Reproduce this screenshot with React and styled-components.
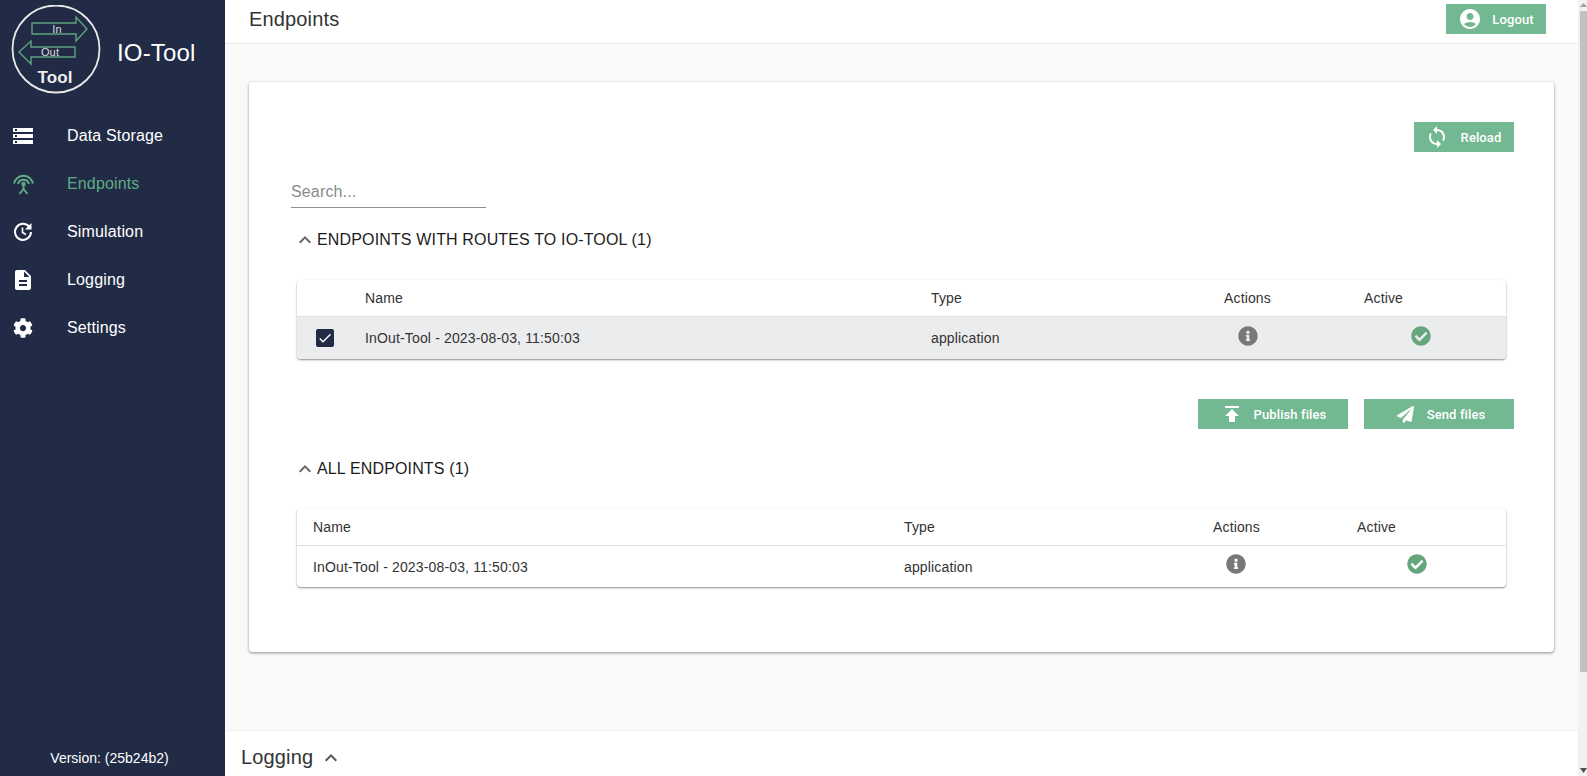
import React from "react";
import styled, { createGlobalStyle } from "styled-components";
import { MdStorage, MdAccountCircle, MdSync, MdPublish, MdKeyboardArrowUp, MdCheck, MdDescription } from "react-icons/md";
import { FaCog, FaPaperPlane, FaInfoCircle, FaCheckCircle } from "react-icons/fa";

const GlobalStyle = createGlobalStyle`
  html, body { margin: 0; padding: 0; height: 100%; overflow: hidden; }
  body { font-family: "Liberation Sans", Arial, sans-serif; background: #fafafa; letter-spacing: 0.15px; }
  * { box-sizing: border-box; }
`;

const Page = styled.div`
  display: flex;
  width: 100%;
  height: 776px;
  overflow: hidden;
`;

const Sidebar = styled.aside`
  flex: 0 0 225px;
  display: flex;
  flex-direction: column;
  background: #212b46;
  color: #fff;
`;

const Brand = styled.div`
  display: flex;
  align-items: center;
  gap: 16px;
  height: 112px;
  padding: 0 0 12px 11px;
`;

const BrandName = styled.span`
  font-size: 24px;
  color: #fff;
  margin-bottom: -6px;
`;

const Nav = styled.nav`
  display: flex;
  flex-direction: column;
`;

const NavItem = styled.div`
  display: flex;
  align-items: center;
  height: 48px;
  font-size: 16px;
  color: ${(p) => (p.$active ? "#5eab85" : "#fff")};
`;

const NavIcon = styled.span`
  flex: 0 0 67px;
  display: flex;
  justify-content: flex-start;
  padding-left: ${(p) => p.$left}px;
  align-items: center;
`;

const Version = styled.div`
  margin-top: auto;
  height: 34px;
  font-size: 14px;
  letter-spacing: 0;
  text-align: center;
  color: #fff;
  padding: 8px 6px 0 0;
`;

const Main = styled.div`
  flex: 1;
  min-width: 0;
  display: flex;
  flex-direction: column;
`;

const Header = styled.header`
  flex: 0 0 44px;
  display: flex;
  align-items: flex-start;
  justify-content: space-between;
  background: #fff;
  border-bottom: 1px solid #ebebeb;
  padding: 4px 32px 0 24px;
`;

const PageTitle = styled.h1`
  margin: 4px 0 0;
  font-size: 20px;
  font-weight: 400;
  color: #333;
`;

const Button = styled.button`
  display: flex;
  align-items: center;
  justify-content: center;
  gap: ${(p) => p.$gap}px;
  width: ${(p) => p.$width || 100}px;
  height: 30px;
  padding: 0 ${(p) => p.$shiftLeft || 0}px 0 ${(p) => p.$shiftRight || 0}px;
  border: 0;
  background: #72b891;
  color: #fff;
  font-family: Roboto, sans-serif;
  font-size: 13px;
  font-weight: 500;
  letter-spacing: 0.1px;
`;

const Content = styled.main`
  flex: 1;
  padding: 38px 24px 0;
  background: #f9f9f9;
`;

const Card = styled.section`
  height: 570px;
  background: #fff;
  border-radius: 4px;
  box-shadow: 0 1px 3px rgba(0, 0, 0, 0.45);
  padding: 40px 40px 0 42px;
`;

const ButtonRow = styled.div`
  display: flex;
  justify-content: flex-end;
  gap: 16px;
  margin-top: ${(p) => p.$top || 0}px;
`;

const SearchField = styled.input`
  display: block;
  width: 195px;
  height: 32px;
  margin-top: 24px;
  padding: 0;
  border: 0;
  border-bottom: 1px solid #8f8f8f;
  outline: none;
  font-family: "Liberation Sans", Arial, sans-serif;
  font-size: 16px;
  letter-spacing: 0.15px;
  color: #333;
  &::placeholder { color: #8a8a8a; opacity: 1; }
`;

const SectionTitle = styled.h2`
  display: flex;
  align-items: center;
  gap: 0;
  height: 24px;
  margin: ${(p) => p.$top}px 0 ${(p) => p.$bottom}px 2px;
  font-size: 16px;
  font-weight: 400;
  color: #1c1c1c;
  svg { color: #666; }
`;

const Table = styled.div`
  margin-left: 6px;
  width: 1209px;
  border-radius: 4px;
  box-shadow: 0 1px 2px rgba(0, 0, 0, 0.45);
`;

const Row = styled.div`
  display: grid;
  grid-template-columns: ${(p) => p.$columns};
  align-items: center;
  height: ${(p) => p.$height}px;
  padding-left: ${(p) => p.$pad}px;
  font-size: 14px;
  color: #333;
  background: ${(p) => (p.$selected ? "#ebecee" : "transparent")};
  border-top: ${(p) => (p.$body ? "1px solid #e0e0e0" : "0")};
  border-radius: ${(p) => (p.$body ? "0 0 4px 4px" : "4px 4px 0 0")};
`;

const IconCell = styled.div`
  display: flex;
  padding-left: ${(p) => p.$offset}px;
  color: ${(p) => p.$color};
  padding-bottom: 5px;
`;

const CheckBox = styled.span`
  display: flex;
  align-items: center;
  justify-content: center;
  width: 18px;
  height: 18px;
  margin-left: 19px;
  border-radius: 2px;
  background: #212b46;
  color: #fff;
`;

const LoggingBar = styled.footer`
  flex: 0 0 45px;
  display: flex;
  align-items: center;
  gap: 6px;
  background: #fff;
  border-radius: 4px 4px 0 0;
  box-shadow: 0 -1px 1px rgba(0, 0, 0, 0.04);
  padding: 8px 0 0 16px;
  font-size: 20px;
  color: #333;
  svg { color: #555; }
`;

const ScrollTrack = styled.div`
  flex: 0 0 9px;
  display: flex;
  flex-direction: column;
  align-items: flex-end;
  background: #f1f1f1;
`;

const ScrollArrow = styled.span`
  display: block;
  width: 7px;
  height: 11px;
  font-size: 0;
  margin-top: ${(p) => (p.$end ? "auto" : "0")};
`;

const ScrollThumb = styled.div`
  width: 7px;
  height: 661px;
  background: #c1c1c1;
`;

function Logo() {
  return (
    <svg width="90" height="90" viewBox="0 0 90 90">
      <circle cx="45" cy="44" r="43.5" fill="none" stroke="#e8e8e8" strokeWidth="1.8" />
      <path d="M21 18H65V12L76 24L65 36V29H21Z" fill="none" stroke="#5da37f" strokeWidth="1.4" />
      <path d="M64 42H20V36L8 47L20 59V52H64Z" fill="none" stroke="#5da37f" strokeWidth="1.4" />
      <text x="46" y="28" fontSize="11" fill="#dcdcdc" textAnchor="middle" fontFamily="Liberation Sans">In</text>
      <text x="39" y="51" fontSize="11" fill="#dcdcdc" textAnchor="middle" fontFamily="Liberation Sans">Out</text>
      <text x="44" y="78" fontSize="17" fontWeight="700" fill="#eee" textAnchor="middle" fontFamily="Liberation Sans">Tool</text>
    </svg>
  );
}

function EndpointIcon() {
  return (
    <svg width="23" height="22" viewBox="0 0 23 22" fill="none" stroke="#5eab85" strokeWidth="2">
      <path d="M2 10.5A9.7 9.7 0 0 1 21 10.5" />
      <path d="M6 11A5.7 5.7 0 0 1 17 11" />
      <circle cx="11.5" cy="11" r="2.2" fill="#5eab85" stroke="none" />
      <path d="M11.5 12V16M11.5 16L7.5 21M11.5 16L15.5 21" />
    </svg>
  );
}

function SimulationIcon() {
  return (
    <svg width="20" height="20" viewBox="0 0 20 20" fill="none" stroke="#fff" strokeWidth="2">
      <path d="M16.5 5.2A8 8 0 1 0 18 10" />
      <path d="M18.5 1V7.5H12Z" fill="#fff" stroke="none" />
      <path d="M9.5 5.5V10.5L13 12.5" strokeWidth="1.6" />
    </svg>
  );
}

const GRID_ONE = "68px 566px 293px 140px 1fr";
const GRID_TWO = "591px 309px 144px 1fr";

export default function App() {
  return (
    <Page>
      <GlobalStyle />
      <Sidebar>
        <Brand>
          <Logo />
          <BrandName>IO-Tool</BrandName>
        </Brand>
        <Nav>
          <NavItem><NavIcon $left={11}><MdStorage size={24} /></NavIcon>Data Storage</NavItem>
          <NavItem $active><NavIcon $left={12}><EndpointIcon /></NavIcon>Endpoints</NavItem>
          <NavItem><NavIcon $left={13}><SimulationIcon /></NavIcon>Simulation</NavItem>
          <NavItem><NavIcon $left={11}><MdDescription size={24} /></NavIcon>Logging</NavItem>
          <NavItem><NavIcon $left={13}><FaCog size={20} /></NavIcon>Settings</NavItem>
        </Nav>
        <Version>Version: (25b24b2)</Version>
      </Sidebar>
      <Main>
        <Header>
          <PageTitle>Endpoints</PageTitle>
          <Button $gap={10}><MdAccountCircle size={24} />Logout</Button>
        </Header>
        <Content>
          <Card>
            <ButtonRow>
              <Button $gap={12} $shiftLeft={2}><MdSync size={24} />Reload</Button>
            </ButtonRow>
            <SearchField placeholder="Search..." />
            <SectionTitle $top={20} $bottom={28}><MdKeyboardArrowUp size={24} />ENDPOINTS WITH ROUTES TO IO-TOOL (1)</SectionTitle>
            <Table>
              <Row $columns={GRID_ONE} $height={36} $pad={0}>
                <span />
                <span>Name</span>
                <span>Type</span>
                <span>Actions</span>
                <span>Active</span>
              </Row>
              <Row $columns={GRID_ONE} $height={43} $pad={0} $selected $body>
                <CheckBox><MdCheck size={16} /></CheckBox>
                <span>InOut-Tool - 2023-08-03, 11:50:03</span>
                <span>application</span>
                <IconCell $offset={14} $color="#787878"><FaInfoCircle size={20} /></IconCell>
                <IconCell $offset={47} $color="#65a67c"><FaCheckCircle size={20} /></IconCell>
              </Row>
            </Table>
            <ButtonRow $top={40}>
              <Button $width={150} $gap={10}><MdPublish size={24} />Publish files</Button>
              <Button $width={150} $gap={13} $shiftRight={4}><FaPaperPlane size={17} />Send files</Button>
            </ButtonRow>
            <SectionTitle $top={28} $bottom={27}><MdKeyboardArrowUp size={24} />ALL ENDPOINTS (1)</SectionTitle>
            <Table>
              <Row $columns={GRID_TWO} $height={37} $pad={16}>
                <span>Name</span>
                <span>Type</span>
                <span>Actions</span>
                <span>Active</span>
              </Row>
              <Row $columns={GRID_TWO} $height={42} $pad={16} $body>
                <span>InOut-Tool - 2023-08-03, 11:50:03</span>
                <span>application</span>
                <IconCell $offset={13} $color="#787878"><FaInfoCircle size={20} /></IconCell>
                <IconCell $offset={50} $color="#65a67c"><FaCheckCircle size={20} /></IconCell>
              </Row>
            </Table>
          </Card>
        </Content>
        <LoggingBar>Logging <MdKeyboardArrowUp size={24} /></LoggingBar>
      </Main>
      <ScrollTrack>
        <ScrollArrow>
          <svg width="7" height="11" viewBox="0 0 7 11"><path d="M3.5 3L7 7H0Z" fill="#a0a0a0" /></svg>
        </ScrollArrow>
        <ScrollThumb />
        <ScrollArrow $end>
          <svg width="7" height="11" viewBox="0 0 7 11"><path d="M0 3H7L3.5 8Z" fill="#505050" /></svg>
        </ScrollArrow>
      </ScrollTrack>
    </Page>
  );
}
